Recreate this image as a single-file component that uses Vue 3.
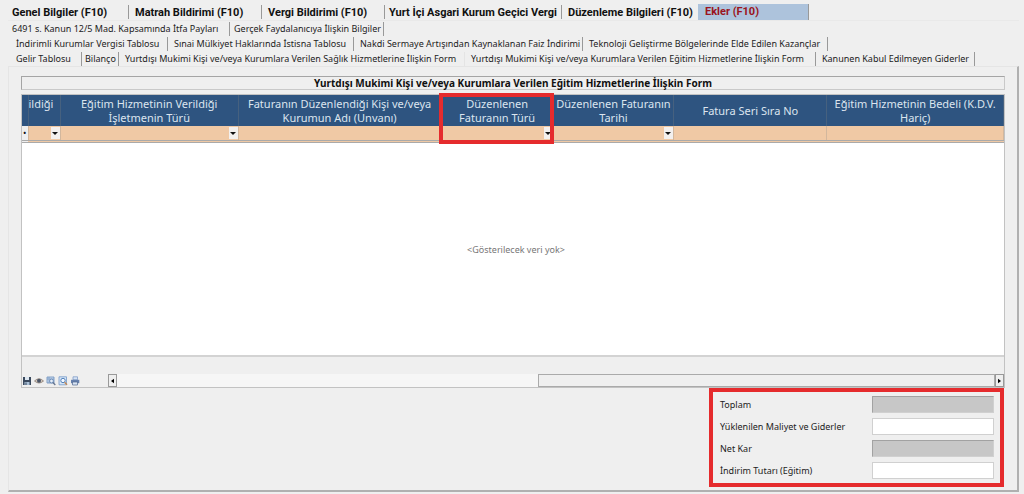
<script setup>
const mainTabs = [
  'Genel Bilgiler (F10)',
  'Matrah Bildirimi (F10)',
  'Vergi Bildirimi (F10)',
  'Yurt İçi Asgari Kurum Geçici Vergi',
  'Düzenleme Bilgileri (F10)',
  'Ekler (F10)',
]
const subTabs = [
  {
    name: 'first',
    items: ['6491 s. Kanun 12/5 Mad. Kapsamında İtfa Payları', 'Gerçek Faydalanıcıya İlişkin Bilgiler'],
  },
  {
    name: 'second',
    items: [
      'İndirimli Kurumlar Vergisi Tablosu',
      'Sınai Mülkiyet Haklarında İstisna Tablosu',
      'Nakdi Sermaye Artışından Kaynaklanan Faiz İndirimi',
      'Teknoloji Geliştirme Bölgelerinde Elde Edilen Kazançlar',
    ],
  },
  {
    name: 'third',
    items: [
      'Gelir Tablosu',
      'Bilanço',
      'Yurtdışı Mukimi Kişi ve/veya Kurumlara Verilen Sağlık Hizmetlerine İlişkin Form',
      'Yurtdışı Mukimi Kişi ve/veya Kurumlara Verilen Eğitim Hizmetlerine İlişkin Form',
      'Kanunen Kabul Edilmeyen Giderler',
    ],
  },
]
const columns = [
  { key: 'country', lines: ['ildiği'], select: true },
  { key: 'business', lines: ['Eğitim Hizmetinin Verildiği', 'İşletmenin Türü'], select: true },
  { key: 'person', lines: ['Faturanın Düzenlendiği Kişi ve/veya', 'Kurumun Adı (Unvanı)'] },
  { key: 'kind', lines: ['Düzenlenen', 'Faturanın Türü'], select: true, marked: true },
  { key: 'date', lines: ['Düzenlenen Faturanın', 'Tarihi'], select: true },
  { key: 'serial', lines: ['Fatura Seri Sıra No'] },
  { key: 'amount', lines: ['Eğitim Hizmetinin Bedeli (K.D.V.', 'Hariç)'] },
]
const totals = [
  { id: 'toplam', label: 'Toplam', locked: true },
  { id: 'maliyet', label: 'Yüklenilen Maliyet ve Giderler' },
  { id: 'netkar', label: 'Net Kar', locked: true },
  { id: 'indirim', label: 'İndirim Tutarı (Eğitim)' },
]
</script>

<template>
  <main class="page">
    <nav class="main-tabs">
      <button
        v-for="(tab, i) in mainTabs"
        :key="tab"
        type="button"
        class="tab"
        :class="{ active: i === 5 }"
      >{{ tab }}</button>
    </nav>
    <nav v-for="row in subTabs" :key="row.name" class="sub-tabs" :class="row.name">
      <button
        v-for="(tab, i) in row.items"
        :key="tab"
        type="button"
        class="tab"
        :class="{ open: row.name === 'third' && i === 3, plain: row.name === 'third' && i === 2 }"
      >{{ tab }}</button>
    </nav>

    <section class="panel">
      <h1 class="title">Yurtdışı Mukimi Kişi ve/veya Kurumlara Verilen Eğitim Hizmetlerine İlişkin Form</h1>

      <div class="grid">
        <table>
          <colgroup>
            <col class="c-mark" />
            <col v-for="c in columns" :key="c.key" :class="'c-' + c.key" />
          </colgroup>
          <thead>
            <tr>
              <th></th>
              <th v-for="c in columns" :key="c.key" :class="{ marked: c.marked, cut: c.key === 'country' }">
                <span v-for="l in c.lines" :key="l" class="line">{{ l }}</span>
              </th>
            </tr>
          </thead>
          <tbody>
            <tr>
              <td class="mark">•</td>
              <td v-for="c in columns" :key="c.key">
                <span v-if="c.select" class="drop">
                  <select :aria-label="c.lines.join(' ')"><option></option></select>
                </span>
                <input v-else type="text" :aria-label="c.lines.join(' ')" />
              </td>
            </tr>
          </tbody>
        </table>

        <div class="empty">&lt;Gösterilecek veri yok&gt;</div>
        <div class="footer-space"></div>
        <div class="status">
          <div class="tools">
            <button type="button" aria-label="Kaydet">
              <svg viewBox="0 0 10 10"><path d="M1 1h8v8H1z" fill="#39485c" /><path d="M3 1h4v3H3z" fill="#dce6f0" /><path d="M2.5 6h5v3h-5z" fill="#a9bfd6" /><path d="M3.5 6.5h1V9h-1z" fill="#39485c" /></svg>
            </button>
            <button type="button" aria-label="Göster">
              <svg viewBox="0 0 10 10"><path d="M.5 5Q5 .5 9.5 5 5 9 .5 5z" fill="#d0c6bd" stroke="#8a7b70" stroke-width=".8" /><circle cx="5" cy="4.8" r="2" fill="#4b5668" /></svg>
            </button>
            <button type="button" aria-label="Tabloda ara">
              <svg viewBox="0 0 10 10"><path d="M1 1h7v6H1z" fill="#c9dbf0" stroke="#6b8dbb" stroke-width=".8" /><path d="M1 3h7M3 1v6" stroke="#6b8dbb" stroke-width=".6" /><circle cx="5.500" cy="5" r="1.900" fill="#e6effa" stroke="#587aa8" stroke-width=".8" /><path d="M7 6.500 9.300 9" stroke="#65748e" stroke-width="1.300" /></svg>
            </button>
            <button type="button" aria-label="Önizleme">
              <svg viewBox="0 0 10 10"><path d="M1 .8h7.500v8H1z" fill="#d7e6f7" stroke="#7398c8" stroke-width=".8" /><circle cx="5" cy="4.500" r="2.200" fill="#f4f9ff" stroke="#5181bb" /><path d="M6.600 6.200 9 8.800" stroke="#c28a58" stroke-width="1.500" /></svg>
            </button>
            <button type="button" aria-label="Yazdır">
              <svg viewBox="0 0 10 10"><path d="M3 .8h4.500v3H3z" fill="#d5e3f6" stroke="#7794c2" stroke-width=".7" /><path d="M1 3.800h8.300v3.400H1z" fill="#6681ae" /><path d="M2.500 6h5v3h-5z" fill="#d9e5f5" stroke="#50698f" stroke-width=".7" /></svg>
            </button>
          </div>
          <div class="scroll">
            <button type="button" class="arrow" aria-label="Sola kaydır"><svg viewBox="0 0 6 8"><path d="M5 1v6L1 4z" /></svg></button>
            <div class="track"><div class="thumb"></div></div>
            <button type="button" class="arrow" aria-label="Sağa kaydır"><svg viewBox="0 0 6 8"><path d="M1 1v6l4-3z" /></svg></button>
          </div>
        </div>
      </div>

      <form class="totals">
        <template v-for="t in totals" :key="t.id">
          <label :for="t.id">{{ t.label }}</label>
          <input :id="t.id" type="text" :readonly="t.locked" :class="{ locked: t.locked }" />
        </template>
      </form>
    </section>
  </main>
</template>

<style>
body {
  background: #efefef;
}
</style>

<style scoped>
* {
  box-sizing: border-box;
}
.page {
  display: flex;
  flex-direction: column;
  min-height: 100vh;
  padding: 4px 5px 2px 8px;
  font-family: "Noto Sans", sans-serif;
  font-size: 9px;
  color: #222;
}
button,
input,
select {
  min-width: 0;
  margin: 0;
  padding: 0;
  border: 0;
  border-radius: 0;
  background: none;
  font: inherit;
  color: inherit;
}
.main-tabs {
  display: grid;
  grid-template-columns: 121px 133px 123px 177px 136px 111px;
  height: 17px;
  font-family: Roboto, sans-serif;
  font-size: 11px;
  font-weight: 700;
  color: #111;
  border-bottom: 1px solid #e9e9e9;
}
.tab {
  height: 14px;
  padding-left: 6px;
  border-right: 1px solid #999;
  line-height: 14px;
  text-align: left;
  white-space: nowrap;
}
.main-tabs .tab {
  margin-top: 1px;
  padding-left: 6px;
  line-height: 16px;
}
.main-tabs .tab:first-child {
  padding-left: 4px;
}
.main-tabs .tab:nth-child(4) {
  padding-left: 4px;
}
.main-tabs .tab:nth-child(5) {
  border-right: 0;
}
.main-tabs .active {
  height: 16px;
  margin-top: 0;
  padding-left: 7px;
  background: #adc3dc;
  color: #9b1420;
  line-height: 14px;
}
.sub-tabs {
  display: grid;
  height: 15px;
  padding-top: 1px;
}
.first {
  grid-template-columns: 222px 154px;
}
.second {
  grid-template-columns: 160px 186px 229px 245px;
}
.third {
  grid-template-columns: 74px 37px 346px 351px 159px;
}
.tab:first-child {
  padding-left: 8px;
}
.first .tab {
  padding-left: 4px;
}
.third .tab:nth-child(2) {
  padding-left: 3px;
}
.third .plain {
  border-right-color: #e4e4e4;
}
.third .open {
  line-height: 12px;
}
.panel {
  display: flex;
  flex: 1;
  flex-direction: column;
  padding: 9px 12px 3px;
  border: 1px solid #e5e5e5;
  border-right: 2px solid #b0b0b0;
  border-bottom: 2px solid #b0b0b0;
}
.title {
  margin: 0 0 4px;
  border: 1px solid #c9c9c9;
  border-top-color: #a5a5a5;
  border-left-color: #a5a5a5;
  font-size: 10px;
  line-height: 12px;
  text-align: center;
  color: #111;
}
.grid {
  display: flex;
  flex: 1;
  flex-direction: column;
  border: 1px solid #c2c2c2;
}
table {
  width: 100%;
  table-layout: fixed;
  border-collapse: collapse;
  border-bottom: 3px double #aaa;
}
.c-mark { width: 6px; }
.c-country { width: 3.3%; }
.c-business { width: 18.1%; }
.c-person { width: 20.7%; }
.c-kind { width: 11.4%; }
.c-date { width: 12.3%; }
.c-serial { width: 15.6%; }
th {
  height: 31px;
  padding: 0;
  border-right: 1px solid #46617f;
  background: #2e5480;
  color: #dce5ef;
  font-size: 11px;
  font-weight: 400;
  line-height: 14px;
}
.line {
  display: block;
  white-space: nowrap;
}
.cut {
  padding-bottom: 14px;
  text-align: left;
}
.marked {
  position: relative;
}
.marked::after {
  content: "";
  position: absolute;
  z-index: 1;
  inset: -2px -1px -18px -3px;
  border: 4px solid #e52b2d;
}
td {
  height: 14px;
  padding: 0;
  border-right: 1px solid #d2b79d;
  background: #f0c9a5;
  line-height: 0;
}
.mark {
  background: #efefef;
  line-height: 14px;
  text-align: center;
  font-size: 9px;
  color: #111;
}
td input,
.drop,
.drop select {
  display: block;
  width: 100%;
  height: 14px;
}
.drop {
  position: relative;
}
.drop select {
  appearance: none;
}
.drop::before {
  content: "";
  position: absolute;
  inset: 1px 0 1px auto;
  width: 9px;
  background: #f3f0ee;
}
.drop::after {
  content: "";
  position: absolute;
  top: 6px;
  right: 2px;
  border: 3px solid transparent;
  border-top-color: #111;
  border-bottom: 0;
}
.empty {
  display: grid;
  flex: 1;
  min-height: 120px;
  place-items: center;
  padding-left: 6px;
  background: #fff;
  color: #777;
}
.footer-space {
  height: 19px;
  border-top: 2px solid #d3d3d3;
}
.status {
  display: flex;
  height: 13px;
}
.tools {
  display: flex;
  flex: 0 0 86px;
  gap: 2px;
}
.tools button {
  width: 10px;
  height: 12px;
}
.tools svg {
  display: block;
  width: 10px;
  height: 10px;
  margin-top: 1px;
}
.scroll {
  display: flex;
  flex: 1;
}
.arrow {
  display: grid;
  flex: 0 0 9px;
  place-items: center;
  border: 1px solid #999;
}
.arrow svg {
  width: 5px;
  height: 6px;
}
.track {
  flex: 1;
  background: #f6f6f6;
}
.thumb {
  width: 52%;
  height: 13px;
  margin-left: auto;
  border: 1px solid #aaa;
  background: #efefef;
}
.totals {
  display: grid;
  grid-template-columns: 1fr 122px;
  align-items: center;
  align-self: flex-end;
  gap: 5px 0;
  width: 295px;
  margin-right: 1px;
  padding: 4px 6px 4px 7px;
  border: 4px solid #e52b2d;
}
.totals input {
  width: 100%;
  height: 17px;
  border: 1px solid #d0d0d0;
  background: #fff;
}
.totals .locked {
  border-top-color: #a2a2a2;
  border-left-color: #a2a2a2;
  background: #c7c7c7;
}
</style>
